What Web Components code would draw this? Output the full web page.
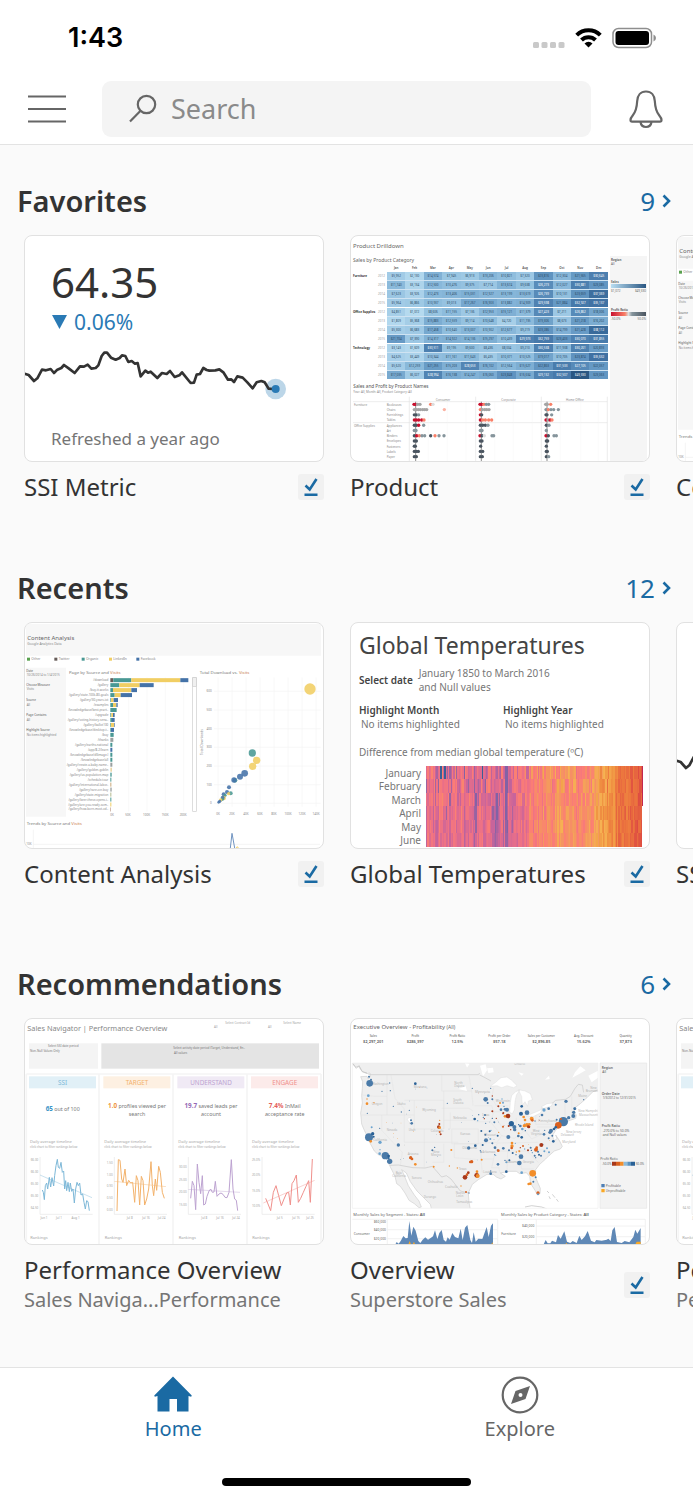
<!DOCTYPE html>
<html lang="en">
<head>
<meta charset="utf-8">
<meta name="viewport" content="width=device-width, initial-scale=1">
<title>Home</title>
<style>
  body {
    margin: 0;
    background: #fafafa;
    color: #333;
    font-family: "Noto Sans", "Open Sans", sans-serif;
  }
</style>
</head>
<body>
<home-app></home-app>

<script>
// Small seeded generator so the generated charts are the same on every load
function seeded(seed) {
  return () => {
    seed = (seed * 1664525 + 1013904223) % 4294967296;
    return seed / 4294967296;
  };
}

function mix(stops, t) {
  t = Math.max(0, Math.min(0.9999, t)) * (stops.length - 1);
  const i = Math.floor(t);
  const f = t - i;
  return 'rgb(' + stops[i].map((c, k) => Math.round(c + (stops[i + 1][k] - c) * f)).join(',') + ')';
}

class StatusBar extends HTMLElement {
  connectedCallback() {
    this.attachShadow({ mode: 'open' });
    this.shadowRoot.innerHTML = `
      <style>
        :host {
          display: flex;
          justify-content: space-between;
          align-items: center;
          height: 76px;
          padding: 0 36px 0 68px;
          color: #000;
        }
        time { font: 600 27px/32px Inter, sans-serif; }
        .icons { display: flex; align-items: center; gap: 10px; }
        svg { display: block; }
      </style>
      <time>1:43</time>
      <div class="icons">
        <svg width="32" height="22" viewBox="0 0 32 22" fill="#c9c9c9">
          <rect x="0" y="15" width="6" height="6" rx="1.5"/><rect x="8.5" y="15" width="6" height="6" rx="1.5"/>
          <rect x="17" y="15" width="6" height="6" rx="1.5"/><rect x="25.5" y="15" width="6" height="6" rx="1.5"/>
        </svg>
        <svg width="27" height="22" viewBox="0 0 27 22">
          <g fill="none" stroke="#000" stroke-width="4">
            <path d="M1.7 8.1a16.8 16.8 0 0 1 23.6 0"/>
            <path d="M6.5 13a10 10 0 0 1 14 0"/>
          </g>
          <path d="M13.5 20.5l-4-4a5.7 5.7 0 0 1 8 0z"/>
        </svg>
        <svg width="45" height="22" viewBox="0 0 45 22">
          <rect x="1" y="1.5" width="38.500" height="19" rx="5.500" fill="none" stroke="#8e8e8e" stroke-width="1.500"/>
          <rect x="3.500" y="4" width="33.500" height="14" rx="3"/>
          <path d="M41.500 7.500q2.500 1 2.500 3.500t-2.500 3.500z" fill="#8e8e8e"/>
        </svg>
      </div>
    `;
  }
}
customElements.define('status-bar', StatusBar);

class SearchHeader extends HTMLElement {
  connectedCallback() {
    this.attachShadow({ mode: 'open' });
    this.shadowRoot.innerHTML = `
      <style>
        :host {
          display: flex;
          align-items: center;
          padding: 5px 26px 7px 24px;
          border-bottom: 1px solid #e3e3e3;
        }
        button {
          border: 0;
          padding: 0;
          background: none;
          flex: none;
        }
        svg { display: block; }
        label {
          flex: 1;
          min-width: 0;
          display: flex;
          align-items: center;
          gap: 13px;
          height: 56px;
          margin: 0 34px 0 32px;
          padding: 0 26px;
          border-radius: 9px;
          background: #f4f4f4;
        }
        input {
          flex: 1;
          min-width: 0;
          border: 0;
          padding: 0;
          outline: 0;
          background: none;
          color: #333;
          font: 27px/36px "Noto Sans", sans-serif;
        }
        input::placeholder { color: #8a8a8a; opacity: 1; }
      </style>
      <button aria-label="Menu">
        <svg width="46" height="40" viewBox="0 0 46 40" stroke="#666" stroke-width="2.200">
          <path d="M4 7.500h38M4 20h38M4 32.500h38"/>
        </svg>
      </button>
      <label>
        <svg width="30" height="30" viewBox="0 0 30 30" fill="none" stroke="#666" stroke-width="2.200">
          <circle cx="18.500" cy="10.500" r="8.700"/><path d="M12.300 17L2 27.500"/>
        </svg>
        <input type="text" placeholder="Search" aria-label="Search">
      </label>
      <button aria-label="Notifications">
        <svg width="42" height="40" viewBox="0 0 42 40" fill="none" stroke="#666" stroke-width="2.200" stroke-linejoin="round">
          <path d="M21 2.500c5.500 0 8.500 4 8.800 9.500.4 7.500 1.500 11 4.500 14.500 1.700 2 2.200 3.300 2.200 4.500 0 1-.6 1.700-1.600 1.700H7.100c-1 0-1.600-.7-1.600-1.700 0-1.200.5-2.500 2.200-4.500 3-3.500 4.100-7 4.500-14.500C12.500 6.500 15.500 2.500 21 2.500z"/>
          <path d="M15.500 33c.5 3.300 2.700 5 5.500 5s5-1.700 5.500-5"/>
        </svg>
      </button>
    `;
  }
}
customElements.define('search-header', SearchHeader);

class ContentShelf extends HTMLElement {
  connectedCallback() {
    this.attachShadow({ mode: 'open' });
    this.shadowRoot.innerHTML = `
      <style>
        :host { display: block; }
        header {
          display: flex;
          justify-content: space-between;
          align-items: center;
          padding: 0 22px 14px 17px;
        }
        h2 { margin: 0; font-size: 29px; line-height: 40px; font-weight: 600; }
        a {
          display: flex;
          align-items: center;
          gap: 7px;
          color: #1a6aa3;
          font-size: 26px;
          line-height: 36px;
          text-decoration: none;
        }
        .row {
          display: flex;
          gap: 26px;
          padding: 0 24px;
          overflow-x: auto;
          scrollbar-width: none;
        }
      </style>
      <header>
        <h2>${this.getAttribute('heading')}</h2>
        <a href="#">${this.getAttribute('count')}
          <svg width="9" height="14" viewBox="0 0 9 14" fill="none" stroke="currentColor" stroke-width="2.600"><path d="M1.500 1.500L7 7l-5.500 5.500"/></svg>
        </a>
      </header>
      <div class="row"><slot></slot></div>
    `;
  }
}
customElements.define('content-shelf', ContentShelf);

class ContentCard extends HTMLElement {
  connectedCallback() {
    const sub = this.getAttribute('sub');
    this.attachShadow({ mode: 'open' });
    this.shadowRoot.innerHTML = `
      <style>
        :host { display: block; flex: 0 0 300px; min-width: 0; }
        .thumb {
          height: 225px;
          border: 1px solid #e1e1e1;
          border-radius: 8px;
          background: #fff;
          overflow: hidden;
        }
        .info {
          display: flex;
          justify-content: space-between;
          align-items: center;
          padding-top: 10px;
        }
        .names { min-width: 0; white-space: nowrap; }
        h3, p { margin: 0; line-height: 30px; font-weight: 400; }
        h3 { font-size: 24px; color: #333; }
        p { font-size: 20px; color: #757575; }
        .badge { flex: none; padding: 4px; border-radius: 3px; background: #f1f1f1; }
        svg { display: block; }
      </style>
      <div class="thumb"><slot></slot></div>
      <div class="info">
        <div class="names">
          <h3>${this.getAttribute('name')}</h3>
          ${sub ? `<p>${sub}</p>` : ''}
        </div>
        ${this.hasAttribute('synced') ? `
        <span class="badge"><svg width="18" height="18" viewBox="0 0 18 18" fill="none" stroke="#1a6aa3" stroke-width="2.600"><path d="M3.500 7.500l4.200 4L14.500 1M2.500 16.800h13"/></svg></span>` : ''}
      </div>
    `;
  }
}
customElements.define('content-card', ContentCard);

class MetricThumb extends HTMLElement {
  connectedCallback() {
    this.attachShadow({ mode: 'open' });
    this.shadowRoot.innerHTML = `
      <style>
        :host { display: block; padding-top: 20px; }
        .value { padding-left: 26px; font-size: 42px; line-height: 52px; }
        .change {
          display: flex;
          align-items: center;
          gap: 7px;
          padding-left: 27px;
          font-size: 21px;
          line-height: 28px;
          color: #2a7ab5;
        }
        svg { display: block; }
        .chart { width: 100%; margin-top: 11px; }
        .fresh { padding: 26px 0 0 26px; font-size: 17px; line-height: 24px; color: #757575; }
      </style>
      <div class="value">64.35</div>
      <div class="change"><svg width="15" height="14"><path d="M0 0h15l-7.500 14z" fill="#2a7ab5"/></svg>0.06%</div>
      <svg class="chart" viewBox="45 363 894 162">
        <circle cx="797" cy="489" r="31" fill="#bcd6e8"/>
        <path fill="none" stroke="#333" stroke-width="8" stroke-linejoin="round" d="M44 443l12 4 16 18 10-8 14-26 12 2 14-4 10 12 10-10 12-5 8-9 14 10 18 14 16-20 12 1 11-6 11 12 13-2 8-8 10-28 8-10 8 0 12 15 14 6 12-5 7-8 10 2 9 18 10-3 10 8 8-2 9 40 14-17 8 6 8-3 20 19 14-15 14 3 10-9 14 18 14-5 8-9 26 32 10-1 8-24 10-2 10-18 10 6 8 2 18-1 12-3 12 9 14 22 10-1 8 8 10-17 16 4 14 14 16 18 12-18 14-4 10 4 12 19 12 1"/>
        <circle cx="797" cy="489" r="12" fill="#2a7ab5"/>
      </svg>
      <div class="fresh">Refreshed a year ago</div>
    `;
  }
}
customElements.define('metric-thumb', MetricThumb);

class ProductThumb extends HTMLElement {
  connectedCallback() {
    const months = ['Jan', 'Feb', 'Mar', 'Apr', 'May', 'Jun', 'Jul', 'Aug', 'Sep', 'Oct', 'Nov', 'Dec'];
    const sales = [
      [5952, 2130, 14574, 7945, 6913, 13206, 10821, 7320, 23816, 12304, 21565, 30645],
      [11740, 3134, 12500, 10476, 9375, 7714, 13674, 9638, 26273, 12027, 30881, 23085],
      [7623, 3926, 12473, 13406, 15031, 12927, 13199, 13619, 26739, 10131, 23659, 37069],
      [5964, 6866, 10937, 9013, 17267, 16903, 13882, 14909, 29598, 21884, 32927, 35137],
      [4851, 1072, 8606, 11155, 7136, 12953, 15121, 11379, 27423, 7211, 26862, 18006],
      [1809, 5368, 15883, 12559, 9114, 10648, 4720, 11735, 19306, 8673, 21218, 16202],
      [5300, 6683, 17458, 10640, 13007, 10902, 12677, 9219, 23286, 14799, 21428, 38112],
      [21704, 7390, 14317, 14922, 14136, 15297, 10439, 29973, 32759, 23403, 30070, 31855],
      [3143, 1609, 30511, 9195, 9600, 8436, 8004, 9210, 30538, 11938, 30201, 20893],
      [4625, 3449, 10344, 11161, 11643, 6435, 10371, 10525, 19017, 10705, 23874, 35632],
      [5620, 12259, 21255, 15203, 28653, 16102, 12564, 15627, 22863, 31533, 27105, 22057],
      [17035, 6027, 28994, 16138, 14247, 16060, 23848, 16634, 29132, 32507, 49330, 23063]
    ];
    const groups = ['Furniture', 'Office Supplies', 'Technology'];
    const blues = [[185, 221, 241], [140, 187, 220], [98, 150, 194], [66, 116, 166], [42, 87, 131]];
    const rows = sales.map((row, i) => `
      <tr class="${i % 4 === 3 ? 'last' : ''}">
        <th class="group">${i % 4 === 0 ? groups[i / 4] : ''}</th><th class="year">${2012 + i % 4}</th>
        ${row.map(v => `<td style="background:${mix(blues, v / 46000)};color:${v > 25500 ? '#fff' : '#2c4a66'}">$${v.toLocaleString('en-US')}</td>`).join('')}
      </tr>`).join('');

    // Dots: [x, colour] per product line, three customer segments each
    const r = '#c8102e', o = '#f98068', g = '#a5a5a5', s = '#86959c', d = '#4a5560';
    const lines = [
      ['Bookcases', [[222, r], [226, r], [233, g], [240, g], [272, o], [279, '#ddd']], [[420, r], [425, r], [432, o], [439, s], [446, s]], [[617, g], [622, g], [632, o]]],
      ['Chairs', [[223, g], [229, g], [235, g], [241, g], [248, g], [254, g], [260, g], [313, '#fbb3a4']], [[421, o], [427, g], [434, g], [440, g], [447, g]], [[618, s], [625, o], [633, s], [641, s], [655, s]]],
      ['Furnishings', [[223, d], [229, d], [236, s]], [[421, r], [425, d]], [[618, d], [621, d], [635, s]]],
      ['Tables', [[223, r], [229, r], [236, r], [245, r], [252, o]], [[421, r], [428, o], [436, o], [446, o], [455, o]], [[618, r], [624, g], [630, r], [636, o]]],
      ['Appliances', [[223, d], [229, d], [236, r], [251, s]], [[421, d], [428, d], [436, d], [444, s]], [[619, d], [627, s]]],
      ['Art', [[223, s], [228, s]], [[421, s], [426, s]], [[619, s]]],
      ['Binders', [[223, d], [230, r], [238, o], [246, s], [254, s], [272, d], [285, o], [297, s], [312, s]], [[420, r], [426, d], [433, '#ddd'], [456, s], [461, s]], [[618, r], [625, d], [642, s], [649, s]]],
      ['Envelopes', [[223, d], [229, d]], [[421, d], [426, d]], [[619, d], [623, d]]],
      ['Fasteners', [[223, d], [226, d]], [[422, d]], [[619, d]]],
      ['Labels', [[223, d], [229, d], [235, d]], [[421, d], [428, d]], [[619, d], [622, d]]],
      ['Paper', [[223, d], [229, d]], [[421, d], [427, d]], [[619, d], [626, s]]]
    ];
    const dots = lines.map(([name, ...cols], i) => {
      const y = 135 + i * 15.7;
      return `<text x="140" y="${y + 4}">${name}</text>` +
        cols.flat().map(([x, c]) => `<circle cx="${x}" cy="${y}" r="5" fill="${c}"/>`).join('');
    }).join('');

    this.attachShadow({ mode: 'open' });
    this.shadowRoot.innerHTML = `
      <style>
        :host { display: grid; grid-template-columns: 256px 37px; column-gap: 1px; height: 100%; padding: 0 2px; }
        h4, h5 { margin: 0; font-weight: 400; color: #666; }
        h4 { grid-column: 1 / 3; font-size: 6px; line-height: 20px; }
        h5 { font-size: 5px; line-height: 8px; }
        table { width: 255px; border-collapse: collapse; table-layout: fixed; font-size: 3px; line-height: 7px; }
        th, td { padding: 0; height: 8px; text-align: center; font-weight: 400; }
        td { border: 0 solid #cfe3f2; border-width: 0 0 1px; }
        thead th { color: #555; font-weight: 600; }
        .last td { border-color: #fff; }
        .group { text-align: left; font-weight: 700; width: 23px; }
        .year { width: 11px; color: #999; }
        svg { display: block; }
        aside { background: #f5f5f5; font-size: 3px; line-height: 4px; padding: 2px 1px; color: #666; }
        aside b { display: block; }
        .ramp { height: 4px; margin-bottom: 1px; }
        .ends { display: flex; justify-content: space-between; margin-bottom: 15px; }
        .region { height: 22px; }
      </style>
      <h4>Product Drilldown</h4>
      <div>
        <h5>Sales by Product Category</h5>
        <table>
          <thead><tr><th class="group"></th><th class="year"></th>${months.map(m => `<th>${m}</th>`).join('')}</tr></thead>
          <tbody>${rows}</tbody>
        </table>
        <svg width="256" height="82" viewBox="39 62 768 246" font-size="9" fill="#888">
          <text x="40" y="86" font-size="14" fill="#555">Sales and Profit by Product Names</text>
          <text x="40" y="101">Year: All, Month: All, Product Category: All</text>
          <path d="M36 127h766M36 190h766M208 112v200M407 112v200M604 112v200M802 112v200" stroke="#e4e4e4" stroke-width="2"/>
          <path d="M265 127v180M322 127v180M378 127v180M464 127v180M520 127v180M577 127v180M661 127v180M722 127v180M775 127v180" stroke="#f3f3f3"/>
          <path d="M227 127v180M424 127v180M621 127v180" stroke="#555" stroke-width="2"/>
          <text x="287" y="124">Consumer</text><text x="484" y="124">Corporate</text><text x="678" y="124">Home Office</text>
          <text x="42" y="139">Furniture</text><text x="42" y="202">Office Supplies</text>
          ${dots}
        </svg>
      </div>
      <aside>
        <div class="region"><b>Region</b>All</div>
        <b>Sales</b>
        <div class="ramp" style="background:linear-gradient(90deg,#b9ddf1,#2a5783)"></div>
        <div class="ends"><span>$1,072</span><span>$49,330</span></div>
        <b>Profit Ratio</b>
        <div class="ramp" style="background:linear-gradient(90deg,#c8102e,#f98068 40%,#ddd 50%,#86959c 60%,#4a5560)"></div>
        <div class="ends"><span>-50.0%</span><span>50.0%</span></div>
      </aside>
    `;
  }
}
customElements.define('product-thumb', ProductThumb);

class AnalysisThumb extends HTMLElement {
  connectedCallback() {
    const t = '#499894', y = '#f1ce63', b = '#4472a8', k = '#665c59', g = '#9aa0a0';
    // Each page: label, then [colour, end x] segments starting at x = 301
    const pages = [
      ['/download', [k, 310], [t, 364], [y, 511], [b, 535]],
      ['/gallery', [t, 328], [y, 389], [b, 431]],
      ['/buy-it-works', [t, 309], [y, 364], [b, 381]],
      ['/gallery/state-100k-80-goals', [t, 314], [y, 332], [b, 366]],
      ['/gallery/30-years-iot', [t, 303], [y, 311], [b, 324]],
      ['/examples', [t, 309], [y, 319], [b, 323]],
      ['/knowledgebase/best-pract..', [t, 320]],
      ['/upgrade', [t, 304], [y, 309], [b, 314]],
      ['/gallery/voting-history-sena..', [t, 306], [b, 314]],
      ['/gallery/ballot100', [t, 303], [y, 312], [b, 314]],
      ['/knowledgebase/desktop-t..', [t, 303], [b, 312]],
      ['/buy', [t, 311]], ['/thanks', [g, 310]], ['/gallery/earths-national', [t, 307]],
      ['/app/8-2/learn', [b, 307]], ['/knowledgebase/d3image-l', [t, 307]], ['/knowledgebase/all', [t, 307]],
      ['/gallery/create-a-baby-name..', [g, 307]], ['/gallery/golden-goblin', ['#ead6a8', 306]],
      ['/gallery/us-population-map', [t, 305]], ['/schedule-tour', [t, 304]],
      ['/gallery/international-labor..', ['#c9a87a', 304]], ['/gallery/rare-ocr-buy', [g, 305]],
      ['/gallery/state-migration', ['#b3b98e', 304]], ['/gallery/beer-these-opens-i..', [t, 304]],
      ['/gallery/are-you-ready-som..', [y, 304]], ['/gallery/how-born-most-od..', ['#b98', 303]]
    ];
    const bars = pages.map(([name, ...segs], i) => {
      const cy = 363.5 + i * 14.92;
      let x = 301;
      return `<text x="295" y="${cy + 3}" text-anchor="end">${name}</text>` + segs.map(([c, end]) => {
        const rect = `<rect x="${x}" y="${cy - 6}" width="${end - x}" height="12" fill="${c}"/>`;
        x = end;
        return rect;
      }).join('');
    }).join('');
    const points = [
      [900, 390, 17, y], [727, 582, 11, t], [740, 604, 11, y], [728, 622, 11, y], [704, 643, 10, b], [690, 653, 9, b],
      [675, 664, 7, t], [672, 663, 8, b], [657, 685, 6, b], [651, 699, 6, b], [662, 703, 6, t], [656, 704, 5, y],
      [641, 706, 6, b], [645, 709, 5, t], [641, 717, 7, y], [638, 716, 6, b], [637, 721, 5, t], [632, 723, 5, y], [629, 727, 5, b], [626, 730, 4, b]
    ].map(([cx, cy, r, c]) => `<circle cx="${cx}" cy="${cy}" r="${r}" fill="${c}" opacity=".88"/>`).join('');
    const yTicks = [0, 1, 2, 3, 4, 5, 6].map(n => `<path d="M612 ${733 - n * 56}h320" stroke="#f4f4f4" stroke-width="2"/><text x="605" y="${736 - n * 56}" text-anchor="end">${n ? n + '00' : 0}</text>`).join('');
    const xTicks = [0, 1, 2, 3, 4, 5, 6, 7].map(n => `<path d="M${624 + n * 42} 355v388" stroke="#f4f4f4" stroke-width="2"/><text x="${624 + n * 42}" y="767" text-anchor="middle">${n * 20}K</text>`).join('');
    const legend = [['Other', '#59a14f', 51], ['Twitter', k, 133], ['Organic', t, 215], ['LinkedIn', y, 297], ['Facebook', b, 379]]
      .map(([n, c, x]) => `<rect x="${x}" y="296" width="9" height="9" fill="${c}"/><text x="${x + 13}" y="304" font-size="10">${n}</text>`).join('');
    const filters = [['Date', '10/26/2014 to 1/4/2015', 338], ['Choose Measure', 'Visits', 381], ['Source', 'All', 427], ['Page Contains', 'All', 472], ['Highlight Source', 'No items highlighted', 517]]
      .map(([a, v, cy]) => `<text x="49" y="${cy}" fill="#555">${a}</text><text x="50" y="${cy + 13}">${v}</text>`).join('');

    this.attachShadow({ mode: 'open' });
    this.shadowRoot.innerHTML = `
      <style>
        :host { display: block; }
        svg { display: block; width: 100%; }
      </style>
      <svg viewBox="45 192 894 675" font-size="9" fill="#858585">
        <path d="M48 195h885v95H48zM48 326h120v447H48z" fill="#f7f7f7"/>
        <text x="52" y="244" font-size="18" fill="#666">Content Analysis</text>
        <text x="52" y="259" font-size="10">Google Analytics Data</text>
        ${legend}${filters}
        <text x="177" y="345" font-size="13" fill="#777">Page by Source and <tspan fill="#c97b4a">Visits</tspan></text>
        <text x="569" y="345" font-size="13" fill="#777">Total Download vs. <tspan fill="#c97b4a">Visits</tspan></text>
        <path d="M356 355v403M411 355v403M466 355v403M521 355v403" stroke="#f6f6f6" stroke-width="2"/>
        ${bars}
        <text x="301" y="771">0K</text><text x="346" y="771">50K</text><text x="399" y="771">100K</text><text x="455" y="771">150K</text><text x="509" y="771">200K</text>
        <rect x="548" y="356" width="11" height="401" fill="#fff" stroke="#ccc" stroke-width="2"/>
        <rect x="548" y="356" width="11" height="26" fill="#f0f0f0" stroke="#ccc" stroke-width="2"/>
        ${yTicks}${xTicks}${points}
        <text transform="translate(580 588) rotate(-90)" font-size="10">Total Downloads</text>
        <text x="50" y="799" font-size="13" fill="#777">Trends by Source and <tspan fill="#c97b4a">Visits</tspan></text>
        <text x="49" y="859">10K</text>
        <path d="M70 812v60M70 856h860" stroke="#eee" stroke-width="2"/>
        <path d="M661 867l5-44 8 44" fill="none" stroke="#6f93c0" stroke-width="3"/>
        <path d="M679 867l3-4 3 4" fill="none" stroke="#f1ce63" stroke-width="3"/>
      </svg>
    `;
  }
}
customElements.define('analysis-thumb', AnalysisThumb);

class TemperatureThumb extends HTMLElement {
  connectedCallback() {
    const months = ['January', 'February', 'March', 'April', 'May', 'June'];
    const heat = [[58, 95, 150], [130, 98, 165], [200, 100, 155], [236, 112, 135], [252, 126, 116], [244, 150, 95], [246, 178, 82], [240, 148, 66], [236, 118, 62], [222, 76, 66], [195, 40, 80]];
    const trend = [[0, .27], [.15, .3], [.25, .26], [.37, .2], [.46, .36], [.6, .48], [.72, .47], [.82, .62], [.88, .78], [1, .87]];
    const rand = seeded(29);
    const years = 167;
    // Noise shared by a year keeps vertical bands running through the months
    const shared = Array.from({ length: years }, () => (rand() - .5) * .24);
    let cells = '';
    for (let m = 0; m < 6; m++) {
      for (let i = 0; i < years; i++) {
        if (i === years - 1 && m > 2) continue;
        const p = i / years;
        const k = trend.findIndex(s => s[0] > p);
        const [x0, v0] = trend[k - 1];
        const [x1, v1] = trend[k];
        const spread = p > .85 ? .09 : [.27, .24, .21, .15, .15, .11][m];
        let v = v0 + (v1 - v0) * (p - x0) / (x1 - x0) + shared[i] * (p > .85 ? .3 : .65) + (rand() - .5) * spread;
        v = Math.max(p > .4 ? .2 : .1, v);
        if (m === 0 && [11, 14, 43].includes(i)) v = 0;
        if (i === years - 1) v = 1;
        cells += `<rect x="${(76 + i * 1.3).toFixed(2)}" y="${(m * 13.4).toFixed(1)}" width="1.5" height="13.6" fill="${mix(heat, v)}"/>`;
      }
    }
    this.attachShadow({ mode: 'open' });
    this.shadowRoot.innerHTML = `
      <style>
        :host { display: block; padding-top: 7px; color: #767676; font-size: 10px; line-height: 14px; }
        h4 { margin: 0 0 6px 8px; font-weight: 400; font-size: 23px; line-height: 30px; color: #444; }
        b { display: block; font-weight: 600; color: #444; }
        .date { display: flex; align-items: center; gap: 6px; padding-left: 8px; }
        .marks { display: grid; grid-template-columns: 144px 1fr; padding: 9px 0 14px 8px; }
        .marks span { padding-left: 2px; }
        .note { padding: 0 0 7px 8px; }
        svg { display: block; width: 100%; }
      </style>
      <h4>Global Temperatures</h4>
      <div class="date"><b>Select date</b><div>January 1850 to March 2016<br>and Null values</div></div>
      <div class="marks">
        <div><b>Highlight Month</b><span>No items highlighted</span></div>
        <div><b>Highlight Year</b><span>No items highlighted</span></div>
      </div>
      <div class="note">Difference from median global temperature (ºC)</div>
      <svg viewBox="1 0 298 86" font-size="10" fill="#767676" text-anchor="end">
        ${months.map((m, i) => `<text x="71" y="${11 + i * 13.4}">${m}</text>`).join('')}
        <g shape-rendering="crispEdges">${cells}</g>
      </svg>
    `;
  }
}
customElements.define('temperature-thumb', TemperatureThumb);

class NavigatorThumb extends HTMLElement {
  connectedCallback() {
    const panels = [
      {
        x: 57, name: 'SSI', tint: '#e1f0f7', ink: '#7db8d8', strong: '#3a95c7', big: '65', rest: ' out of 100', more: '',
        ticks: [['66.00', 604], ['66.00', 639], ['65.00', 674], ['65.00', 710], ['64.50', 746]], dates: [['Jun 1', 102], ['Jul 1', 147], ['Aug 1', 197]],
        line: '97,693 100,700 103,722 106,680 110,672 113,690 118,655 122,684 126,656 131,681 134,650 138,620 142,601 145,625 149,628 153,610 157,640 161,636 164,690 167,665 170,695 174,670 178,698 181,672 185,697 189,690 193,732 197,690 201,670 205,680 209,672 213,708 218,705 222,730 226,750 230,725 234,728 238,755',
        slope: 'M90 648L246 716'
      },
      {
        x: 280, name: 'TARGET', tint: '#fdf0e2', ink: '#f3b26b', strong: '#ee9440', big: '1.0', rest: ' profiles viewed per', more: 'search',
        ticks: [['1.50', 611], ['1.00', 647], ['0.90', 682], ['0.50', 718], ['0.00', 754]], dates: [['Jul 8', 359], ['Jul 16', 408], ['Jul 24', 455]],
        line: '321,756 325,602 330,604 335,660 339,670 345,630 350,680 356,664 362,672 368,670 374,730 379,650 384,665 389,738 394,652 399,665 404,738 410,720 416,690 423,608 427,680 431,710 436,660 440,694 446,622 451,640 457,700 463,718',
        slope: 'M313 667L468 683'
      },
      {
        x: 502, name: 'UNDERSTAND', tint: '#f0eaf5', ink: '#bda3d1', strong: '#9468b5', big: '19.7', rest: ' saved leads per', more: 'account',
        ticks: [['30.00', 624], ['25.00', 662], ['20.00', 700], ['15.00', 738]], dates: [['Jul 8', 583], ['Jul 16', 630], ['Jul 24', 678]],
        line: '542,718 547,667 552,680 557,752 562,615 567,670 572,704 577,650 581,738 586,735 591,712 597,696 602,690 607,700 612,699 616,667 621,712 627,705 633,702 639,706 645,715 651,716 657,700 664,602 669,690 674,720 679,724 683,755',
        slope: 'M535 691L690 700'
      },
      {
        x: 723, name: 'ENGAGE', tint: '#fcebea', ink: '#f0908c', strong: '#e45f5a', big: '7.4%', rest: ' InMail', more: 'acceptance rate',
        ticks: [['25.0%', 602], ['20.0%', 648], ['15.0%', 695], ['10.0%', 742]], dates: [['Jul 5', 809], ['Jul 15', 858], ['Jul 25', 900]],
        line: '767,718 774,735 782,755 790,700 798,680 806,710 814,740 822,720 830,702 836,700 841,738 846,674 852,665 859,648 865,730 872,718 880,700 888,682 896,665 901,730 907,600',
        slope: 'M760 732L914 664'
      }
    ];
    const body = panels.map(p => {
      const mid = p.x + 101;
      return `
        <rect x="${p.x}" y="352" width="201" height="36" fill="${p.tint}"/>
        <text x="${mid}" y="378" font-size="19" fill="${p.ink}" text-anchor="middle">${p.name}</text>
        <text x="${mid}" y="${p.more ? 446 : 457}" font-size="16" fill="#777" text-anchor="middle"><tspan font-size="19" font-weight="700" fill="${p.strong}">${p.big}</tspan>${p.rest}</text>
        <text x="${mid}" y="470" font-size="16" fill="#777" text-anchor="middle">${p.more}</text>
        <text x="${p.x + 3}" y="552" font-size="12">Daily average timeline</text>
        <text x="${p.x + 3}" y="567" font-size="9">click chart to filter rankings below</text>
        <path d="M${p.x + 33} 594v172h158" fill="none" stroke="#e6e6e6" stroke-width="2"/>
        ${p.ticks.map(([t, cy]) => `<text x="${p.x + 28}" y="${cy + 3}" font-size="9" text-anchor="end">${t}</text>`).join('')}
        ${p.dates.map(([t, cx]) => `<text x="${cx}" y="781" font-size="9" text-anchor="middle">${t}</text>`).join('')}
        <path d="${p.slope}" stroke="${p.ink}" stroke-width="2" opacity=".6"/>
        <polyline points="${p.line}" fill="none" stroke="${p.ink}" stroke-width="3" stroke-linejoin="round"/>
        <text x="${p.x + 4}" y="839" font-size="12">Rankings</text>`;
    }).join('');

    this.attachShadow({ mode: 'open' });
    this.shadowRoot.innerHTML = `
      <style>
        :host { display: block; }
        svg { display: block; width: 100%; }
      </style>
      <svg viewBox="45 180 894 675" fill="#a5a5a5">
        <text x="52" y="217" font-size="22" fill="#888">Sales Navigator | Performance Overview</text>
        <g font-size="9">
          <text x="646" y="194">Select Contract Id</text><text x="820" y="194">Select Name</text>
          <text x="612" y="208">All</text><text x="774" y="208">All</text>
        </g>
        <rect x="57" y="253" width="207" height="76" fill="#f4f4f4"/>
        <rect x="274" y="253" width="653" height="76" fill="#e4e4e4"/>
        <g font-size="9" fill="#777">
          <text x="114" y="265">Select SSI date period</text><text x="60" y="278">Non-Null Values Only</text>
          <text x="490" y="270">Select activity date period (Target, Understand, En..</text><text x="492" y="284">All values</text>
        </g>
        <path d="M49 345h884M49 345v520M267 345v520M489 345v520M711 345v520M933 345v520" stroke="#f5f5f5" stroke-width="5"/>
        ${body}
      </svg>
    `;
  }
}
customElements.define('navigator-thumb', NavigatorThumb);

class MapThumb extends HTMLElement {
  connectedCallback() {
    const b = '#4a7aa8', n = '#2a6196', l = '#6ba3cf', o = '#f28e2b', d = '#a8381a', m = '#d9601f';
    const marks = [
      [74, 73, 10, b], [72, 53, 3, b], [78, 62, 3, b], [134, 72, 2, b], [111, 97, 2, b], [136, 95, 2, b], [211, 74, 4, n], [70, 110, 4, l],
      [66, 120, 2, o], [66, 134, 4, o], [87, 131, 2, o], [67, 163, 2, b], [145, 142, 2, b], [193, 154, 2, b], [169, 159, 2, b], [200, 193, 4, b], [198, 184, 3, b],
      [72, 235, 12, b], [83, 224, 5, n], [86, 233, 3, n], [80, 205, 3, l], [104, 208, 2, b], [77, 247, 4, o], [105, 250, 5, l], [121, 290, 11, b], [131, 291, 4, n], [104, 284, 4, l], [134, 307, 8, b], [131, 297, 3, n], [105, 272, 2, l],
      [160, 258, 5, b], [197, 296, 5, m], [201, 300, 4, m], [211, 316, 4, o], [266, 323, 3, o], [262, 274, 3, b], [269, 265, 2, n], [284, 184, 2, o], [283, 195, 3, d], [281, 204, 5, d], [284, 206, 4, o], [284, 219, 3, m], [287, 226, 3, d],
      [319, 273, 3, o], [313, 321, 2, o], [337, 327, 2, o], [371, 267, 5, b], [391, 260, 4, n], [413, 258, 3, n], [380, 308, 5, m], [376, 309, 4, m], [360, 355, 7, d], [366, 347, 4, m], [370, 341, 4, d], [395, 349, 7, d], [398, 351, 6, o], [396, 338, 4, o], [348, 381, 2, o], [363, 399, 3, m], [372, 402, 2, b],
      [307, 133, 2, b], [382, 88, 2, b], [437, 88, 2, b], [422, 121, 7, b], [442, 121, 3, b], [428, 132, 3, b], [389, 180, 4, n], [420, 168, 3, b], [442, 178, 2, n], [409, 216, 3, n], [434, 217, 3, n], [423, 244, 6, b], [442, 253, 3, b], [450, 266, 4, b], [460, 275, 4, m], [461, 220, 2, o], [458, 230, 3, n],
      [468, 152, 4, b], [480, 151, 4, b], [486, 152, 6, b], [475, 162, 3, d], [480, 172, 4, o], [489, 171, 7, d], [499, 194, 8, n], [491, 201, 3, d], [474, 203, 3, m], [508, 204, 6, b], [509, 212, 5, b], [528, 164, 6, n], [546, 161, 7, b], [530, 142, 4, n], [536, 174, 4, o], [540, 183, 4, o], [538, 200, 5, o], [546, 198, 6, o], [551, 203, 5, d], [553, 196, 4, o], [560, 179, 6, o], [562, 184, 4, m], [526, 201, 4, b], [532, 210, 4, l], [520, 231, 4, b], [530, 235, 4, n], [490, 234, 6, b], [534, 261, 3, m], [501, 252, 4, o], [501, 261, 5, o], [500, 267, 4, m], [492, 274, 3, b], [503, 282, 3, n], [475, 268, 4, b], [528, 293, 7, b], [523, 312, 7, b], [484, 338, 4, n], [459, 316, 4, b], [437, 344, 4, b], [437, 336, 2, b], [484, 310, 3, l], [530, 341, 4, l],
      [589, 258, 6, d], [573, 272, 6, m], [575, 266, 4, m], [557, 266, 3, b], [569, 290, 3, b], [579, 278, 3, b], [598, 277, 3, l], [606, 268, 3, l], [588, 290, 3, b], [612, 280, 3, l], [563, 343, 10, o], [565, 368, 3, b], [556, 374, 4, o], [551, 375, 4, o], [579, 402, 5, m], [579, 406, 3, l], [572, 355, 3, b],
      [591, 168, 4, b], [597, 153, 5, l], [611, 149, 4, b], [632, 137, 3, b], [663, 127, 5, b], [689, 149, 4, n], [686, 160, 5, b], [685, 171, 6, b], [691, 149, 3, b], [671, 176, 5, b], [655, 188, 14, b], [640, 199, 10, m], [632, 205, 4, n], [618, 215, 6, b], [615, 220, 5, b], [627, 210, 4, n], [625, 247, 4, n], [611, 238, 3, b], [597, 226, 4, b], [622, 230, 3, b], [648, 180, 3, m], [716, 122, 2, b], [635, 182, 3, b]
    ];
    const rand = seeded(7);
    const small = Array.from({ length: 80 }, () => {
      const x = 395 + rand() * 225;
      const y = 100 + rand() * 205;
      return [x.toFixed(0), y.toFixed(0), 1 + Math.round(rand() * 2), [b, n, l, o, d, b][Math.floor(rand() * 6)]];
    }).filter(p => p[0] < 480 || p[1] > 165);
    const far = Array.from({ length: 26 }, () => [(90 + rand() * 300).toFixed(0), (80 + rand() * 230).toFixed(0), 1, [b, '#999', o][Math.floor(rand() * 3)]]);
    const dots = far.concat(small, marks).map(([x, y, r, c]) => `<circle cx="${x}" cy="${y}" r="${r}" fill="${c}"/>`).join('');
    const places = [['Washington', 80, 79], ['Oregon', 80, 139], ['Idaho', 157, 138], ['Montana', 206, 88], ['North', 328, 74], ['Dakota', 328, 83], ['South', 325, 125], ['Dakota', 325, 134], ['Minnesota', 390, 101], ['Wyoming', 232, 157], ['Nebraska', 325, 181], ['Nevada', 125, 216], ['Utah', 191, 216], ['Colorado', 257, 219], ['Kansas', 346, 228], ['California', 85, 246], ['Arizona', 188, 287], ['New', 264, 281], ['Mexico', 258, 290], ['Texas', 341, 334], ['Chihuahua', 248, 371], ['Coahuila', 300, 387], ['Sonora', 200, 360], ['Baja', 152, 345], ['California', 142, 355], ['Nuevo', 332, 404], ['León', 334, 413], ['Tamaulipas', 334, 433], ['Durango', 236, 418], ['Iowa', 412, 171], ['Missouri', 418, 231], ['Arkansas', 412, 283], ['Oklahoma', 352, 270], ['Alabama', 482, 313], ['Georgia', 533, 312], ['Louisiana', 415, 341], ['Wisconsin', 452, 130], ['Pennsylvania', 580, 190], ['West', 563, 219], ['Virginia', 558, 229], ['Maine', 700, 113], ['New', 736, 90], ['Brunswick', 722, 99], ['New Hampshire', 700, 160], ['Massachusetts', 702, 172], ['Rhode Island', 690, 202], ['New Jersey', 663, 222], ['Delaware', 647, 232], ['Maryland', 652, 251], ['Ontario', 508, 18]]
      .map(([t, x, y]) => `<text x="${x}" y="${y}">${t}</text>`).join('');
    const kpis = [['Sales', '$2,297,201', 100], ['Profit', '$286,397', 226], ['Profit Ratio', '12.5%', 352], ['Profit per Order', '$57.18', 478], ['Sales per Customer', '$2,896.85', 604], ['Avg. Discount', '15.62%', 731], ['Quantity', '37,873', 857]]
      .map(([a, v, x]) => `<text x="${x}" y="235" font-size="9">${a}</text><text x="${x}" y="253" font-size="12" font-weight="600">${v}</text>`).join('');

    this.attachShadow({ mode: 'open' });
    this.shadowRoot.innerHTML = `
      <style>
        :host { display: block; }
        svg { display: block; width: 100%; }
      </style>
      <svg viewBox="33 180 894 675" fill="#666" font-size="10">
        <defs><clipPath id="frame"><path d="M22 12h737v436H22z"/></clipPath></defs>
        <text x="40" y="210" font-size="18">Executive Overview - Profitability <tspan font-size="15">(All)</tspan></text>
        <g text-anchor="middle" fill="#555">${kpis}</g>
        <g transform="translate(15 300)">
          <g clip-path="url(#frame)">
            <path fill="#efefef" stroke="#d0d0d0" stroke-width="2" stroke-linejoin="round" d="M22 5L22 15 32 24 40 22 52 38 66 44 75 42 76 52 70 60 66 52 47 53 53 68 52 88 50 110 52 132 47 162 50 195 58 214 70 238 76 254 88 276 100 287 116 294 128 304 133 318 141 334 150 352 155 374 166 382 180 402 192 424 208 434 222 446 229 444 222 426 208 408 190 380 178 350 170 332 184 342 196 368 216 396 236 416 256 436 260 452 376 452 372 430 370 402 382 376 400 362 426 346 446 347 454 354 468 360 481 352 466 342 494 337 514 337 524 344 544 341 554 352 556 366 561 380 570 394 576 406 585 404 586 388 578 370 571 352 572 332 584 316 602 300 612 290 628 276 646 270 652 262 644 246 632 228 636 238 628 246 622 230 632 214 640 206 664 188 692 178 694 168 688 160 690 146 706 134 726 116 744 98 762 92 762 5Z"/>
            <path fill="none" stroke="#c8c8c8" stroke-width="2" d="M70 47H400L404 42M404 48L420 56 438 66M135 319L160 318 204 326 240 327 262 322 276 338 290 354 304 350 318 360 332 378 346 396 372 402M590 148L616 138 632 124 662 121 676 112 690 88 700 76 712 78 716 100"/>
            <path fill="none" stroke="#dedede" stroke-width="1" d="M52 108L90 112 126 112M126 48V168M50 168H178M178 168V150L150 118 138 48M178 124H208M208 124H296V210H208V124M178 168H208M110 168V214L172 280 166 318M178 168V250H340M238 210V326M296 96V210M290 48V96H380M290 148H372L384 156M316 160L316 210M296 184H388M320 210H400V254H320V210M296 254V310H262M328 268V254H404M328 268V296L400 302M388 140H440L446 160 436 188H392M372 50L380 96 384 140M436 188L470 230 456 250 404 252M470 230L508 238 540 214M408 254V302L412 342M408 300H446L456 252 580 250M446 300L440 326 462 326 464 340M460 276H545M488 276L486 336M520 276L530 330H566M545 276L580 310M560 272L600 272 610 290M514 176V222M540 174V218M572 160V196H634M540 214L560 240 590 226 600 210M576 204H634M446 86L440 116 454 140H490M446 158H494M452 176L478 214M660 122L660 176M680 112V176"/>
            <path fill="#fff" stroke="#d4d4d4" stroke-width="1" d="M436 82L452 70 468 56 486 54 500 64 516 80 506 86 486 80 470 86 456 80ZM494 160L496 130 500 110 512 98 524 94 514 108 510 128 508 152 502 164ZM520 92L540 96 556 104 562 122 550 126 548 142 540 128 532 138 530 112ZM544 172L560 164 580 156 592 150 586 162 566 172ZM588 144L606 134 624 132 618 142 596 148ZM186 180L196 174 202 192 196 194Z"/>
            <path fill="#fff" d="M360 12L374 14 366 26ZM405 20L422 16 426 34 414 52ZM426 28L444 26 446 40 430 42ZM340 90L362 82 366 96ZM600 62L612 50 614 60ZM682 56L690 40 706 22 722 34 704 44ZM730 50L762 34 762 54 740 70ZM520 40L536 44 530 50Z"/>
            <path fill="none" stroke="#bbb" stroke-width="2" d="M24 14l10 14 8-8 10 18 14 4M606 396l6 6M612 412l4 8M622 406l8 10M634 420l6 8M540 444l20-4 30 4 16 6"/>
            <g font-size="9" fill="#b4b4b4">${places}</g>
            ${dots}
          </g>
        </g>
        <path fill="none" stroke="#eee" stroke-width="2" d="M37 312h737v436H37z"/>
        <path fill="#f3f3f3" stroke="#e6e6e6" stroke-width="2" d="M780 312h140v436H780z"/>
        <text x="785" y="331" font-weight="600">Region</text><text x="787" y="343">All</text>
        <text x="785" y="407" font-weight="600">Order Date</text><text x="788" y="419" font-size="9">1/3/2012 to 12/31/2015</text>
        <text x="785" y="505" font-weight="600">Profit Ratio</text><text x="788" y="518">-270.0% to 50.0%</text><text x="788" y="531">and Null values</text>
        <text x="781" y="603">Profit Ratio</text><text x="786" y="618" font-size="9">-50.0%</text><text x="887" y="618" font-size="9">50.0%</text>
        <path d="M816 608h12v12h-12z" fill="#a8381a"/><path d="M828 608h12v12h-12z" fill="#d9601f"/><path d="M840 608h11v12h-11z" fill="#f28e2b"/>
        <path d="M851 608h11v12h-11z" fill="#8dbbd9"/><path d="M862 608h11v12h-11z" fill="#5b93c0"/><path d="M873 608h12v12h-12z" fill="#2a6196"/>
        <path d="M784 675h10v10h-10z" fill="#4f7fb5"/><path d="M784 690h10v10h-10z" fill="#f9a825"/>
        <text x="797" y="683">Profitable</text><text x="797" y="698">Unprofitable</text>
        <text x="40" y="770" font-size="12">Monthly Sales by Segment - States: <tspan font-weight="700">All</tspan></text>
        <text x="483" y="770" font-size="12">Monthly Sales by Product Category - States: <tspan font-weight="700">All</tspan></text>
        <path d="M37 781h436v80M142 781v80M483 781h433v80M589 781v80M142 812h330M142 839h330M589 801h326M589 833h326" fill="none" stroke="#ececec" stroke-width="2"/>
        <text x="41" y="827">Consumer</text><text x="484" y="827">Furniture</text>
        <g text-anchor="end"><text x="138" y="791">$60,000</text><text x="138" y="815">$40,000</text><text x="138" y="842">$20,000</text><text x="583" y="804">$40,000</text><text x="583" y="836">$20,000</text></g>
        <path fill="#5f88b6" d="M165 858L170 849 176 854 182 846 190 831 197 838 203 837 208 786 214 830 220 803 227 815 235 846 241 852 248 842 256 835 264 842 273 836 279 832 285 814 292 840 298 822 305 813 311 842 318 848 323 835 329 842 337 822 345 834 355 838 362 809 368 843 375 806 382 798 391 843 396 852 401 820 407 848 415 839 427 840 440 804 446 834 453 800 459 793V858Z"/>
        <path fill="#5f88b6" d="M610 858L617 843 623 853 631 853 636 845 648 850 654 828 662 839 673 817 681 848 691 852 698 846 710 852 718 830 725 843 735 832 743 816 753 845 764 850 769 843 785 845 800 842 805 839 812 846 817 814 824 804 831 849 845 852 854 846 868 850 880 834 886 812 892 824 902 807V858Z"/>
        <path fill="#f9a825" d="M205 856l4-10 4 10zM218 856l4-8 3 8zM454 856l3-6 2 6zM886 856l4-8h12v8zM676 856l3-5 3 5z"/>
      </svg>
    `;
  }
}
customElements.define('map-thumb', MapThumb);

class TabBar extends HTMLElement {
  connectedCallback() {
    this.attachShadow({ mode: 'open' });
    this.shadowRoot.innerHTML = `
      <style>
        :host {
          display: block;
          border-top: 1px solid #e3e3e3;
          background: #fff;
        }
        nav { display: grid; grid-template-columns: 1fr 1fr; height: 110px; }
        a {
          display: flex;
          flex-direction: column;
          align-items: center;
          padding-top: 7px;
          color: #666;
          font-size: 20px;
          line-height: 27px;
          text-decoration: none;
        }
        a[aria-current] { color: #1a6aa3; }
        svg { display: block; }
        .grip {
          width: 36%;
          height: 8px;
          margin: 0 auto 14px;
          border-radius: 4px;
          background: #000;
        }
      </style>
      <nav>
        <a href="#" aria-current="page">
          <svg width="40" height="40" viewBox="0 0 40 40" fill="currentColor"><path d="M20 1.500l18.500 18.800c.6.700-.2 1.700-1.200 1.300l-1.800-.6V36.500H24V24h-7.500v12.500H4.500V21l-1.800.6c-1 .4-1.800-.6-1.200-1.300z"/></svg>
          Home
        </a>
        <a href="#">
          <svg width="40" height="40" viewBox="0 0 40 40"><circle cx="20" cy="20" r="17.300" fill="none" stroke="#666" stroke-width="2.200"/><path fill="#666" fill-rule="evenodd" d="M30 11l-4.500 13L11 29l4.500-13zM20.500 18a2 2 0 1 0 0 4 2 2 0 0 0 0-4z"/></svg>
          Explore
        </a>
      </nav>
      <div class="grip"></div>
    `;
  }
}
customElements.define('tab-bar', TabBar);

class HomeApp extends HTMLElement {
  connectedCallback() {
    this.attachShadow({ mode: 'open' });
    this.shadowRoot.innerHTML = `
      <style>
        :host {
          display: flex;
          flex-direction: column;
          min-height: 100vh;
          overflow: hidden;
        }
        .top { background: #fff; }
        main {
          flex: 1;
          display: flex;
          flex-direction: column;
          gap: 66px;
          padding: 36px 0 40px;
        }
        content-shelf:last-child { padding-top: 9px; }
      </style>
      <div class="top">
        <status-bar></status-bar>
        <search-header></search-header>
      </div>
      <main>
        <content-shelf heading="Favorites" count="9">
          <content-card name="SSI Metric" synced><metric-thumb></metric-thumb></content-card>
          <content-card name="Product" synced><product-thumb></product-thumb></content-card>
          <content-card name="Content Analysis" synced><analysis-thumb></analysis-thumb></content-card>
        </content-shelf>
        <content-shelf heading="Recents" count="12">
          <content-card name="Content Analysis" synced><analysis-thumb></analysis-thumb></content-card>
          <content-card name="Global Temperatures" synced><temperature-thumb></temperature-thumb></content-card>
          <content-card name="SSI Metric" synced><metric-thumb></metric-thumb></content-card>
        </content-shelf>
        <content-shelf heading="Recommendations" count="6">
          <content-card name="Performance Overview" sub="Sales Naviga...Performance"><navigator-thumb></navigator-thumb></content-card>
          <content-card name="Overview" sub="Superstore Sales" synced><map-thumb></map-thumb></content-card>
          <content-card name="Performance" sub="Performance"><navigator-thumb></navigator-thumb></content-card>
        </content-shelf>
      </main>
      <tab-bar></tab-bar>
    `;
  }
}
customElements.define('home-app', HomeApp);
</script>
</body>
</html>
